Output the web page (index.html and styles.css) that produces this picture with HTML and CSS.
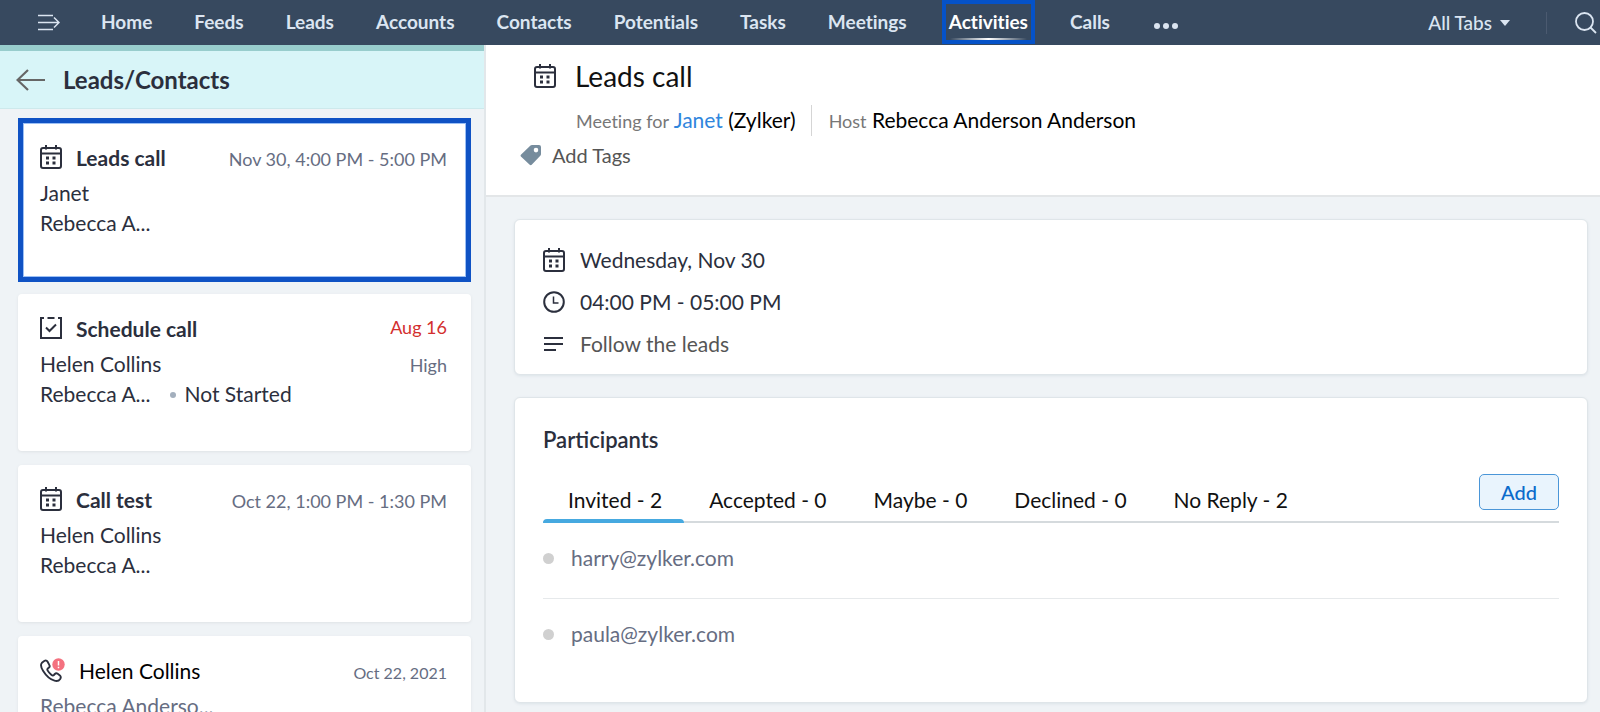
FILE: index.html
```html
<!DOCTYPE html>
<html lang="en">
<head>
<meta charset="utf-8">
<title>Activities - Leads call</title>
<link rel="stylesheet" href="styles.css">
</head>
<body>
<svg class="sprite" aria-hidden="true">
  <symbol id="calendar" viewBox="0 0 22 24">
    <g fill="none" stroke="currentColor" stroke-width="2"><rect x="1" y="3" width="20" height="20" rx="2"/><path d="M1 8.500h20M6 0v4.500M16 0v4.500"/></g>
    <path fill="currentColor" d="M6 11.500h3v3H6zM12.500 11.500h3v3h-3zM6 16.500h3v3H6zM12.500 16.500h3v3h-3z"/>
  </symbol>
</svg>
<header class="topbar">
  <button class="icon-button menu" aria-label="Open menu">
    <svg width="22" height="18" viewBox="0 0 22 18" fill="none" stroke="currentColor" stroke-width="1.500"><path d="M0 1.500h15M0 8.500h20.500M0 15.500h15M16 3.500l5 5-5 5"/></svg>
  </button>
  <nav class="tabs">
    <a href="#">Home</a>
    <a href="#">Feeds</a>
    <a href="#">Leads</a>
    <a href="#">Accounts</a>
    <a href="#">Contacts</a>
    <a href="#">Potentials</a>
    <a href="#">Tasks</a>
    <a href="#">Meetings</a>
    <a href="#" class="active" aria-current="page">Activities</a>
    <a href="#">Calls</a>
  </nav>
  <button class="icon-button more" aria-label="More tabs">
    <svg width="24" height="6" viewBox="0 0 24 6" fill="currentColor"><circle cx="3" cy="3" r="3"/><circle cx="12" cy="3" r="3"/><circle cx="21" cy="3" r="3"/></svg>
  </button>
  <button class="all-tabs">All Tabs
    <svg width="10" height="6" viewBox="0 0 10 6" fill="currentColor"><path d="M0 0h10L5 6z"/></svg>
  </button>
  <span class="topbar-divider"></span>
  <button class="icon-button search" aria-label="Search">
    <svg width="22" height="22" viewBox="0 0 22 22" fill="none" stroke="currentColor" stroke-width="1.800"><circle cx="9.500" cy="9.500" r="8.500"/><path d="M15.500 15.500L21 21"/></svg>
  </button>
</header>
<div class="workspace">
  <aside class="sidebar">
    <div class="sidebar-head">
      <button class="icon-button back" aria-label="Back">
        <svg width="30" height="22" viewBox="0 0 30 22" fill="none" stroke="currentColor" stroke-width="2.200"><path d="M29 11H2M12 1L1.500 11 12 21"/></svg>
      </button>
      <h2>Leads/Contacts</h2>
    </div>
    <div class="activity-list">
      <article class="activity selected">
        <div class="activity-top">
          <svg class="activity-icon" width="22" height="24"><use href="#calendar"/></svg>
          <h3>Leads call</h3>
          <time>Nov 30, 4:00 PM - 5:00 PM</time>
        </div>
        <p>Janet</p>
        <p>Rebecca A...</p>
      </article>
      <article class="activity">
        <div class="activity-top task">
          <svg class="activity-icon" width="22" height="24" viewBox="0 0 22 24" fill="none" stroke="currentColor" stroke-width="2"><path d="M4 2H1v20h20V2h-3M7.500 2h7M6 11.500l3.500 3.500 6.500-6.500"/></svg>
          <h3>Schedule call</h3>
          <time class="overdue">Aug 16</time>
        </div>
        <p>Helen Collins <span class="priority">High</span></p>
        <p>Rebecca A... <span class="status">Not Started</span></p>
      </article>
      <article class="activity">
        <div class="activity-top">
          <svg class="activity-icon" width="22" height="24"><use href="#calendar"/></svg>
          <h3>Call test</h3>
          <time>Oct 22, 1:00 PM - 1:30 PM</time>
        </div>
        <p>Helen Collins</p>
        <p>Rebecca A...</p>
      </article>
      <article class="activity call">
        <div class="activity-top">
          <svg class="activity-icon" width="25" height="24" viewBox="0 0 25 24"><path fill="none" stroke="currentColor" stroke-width="1.900" stroke-linejoin="round" d="M4.600 2.800L1.900 4.800C.4 6.500 1 9.600 3.200 13.100 5.900 17.500 10.500 21.600 14.500 22.700c2.700.7 4.600-.1 5.700-1.800.8-1.300.7-2.600-.3-3.500l-2.200-1.600c-1-.7-2.100-.6-2.900.2l-.9 1c-.7.700-1.500.6-2.600-.3-1.500-1.200-2.800-2.700-3.600-4.100-.6-1-.5-1.700.3-2.300l.8-.6c.9-.7 1.100-1.800.5-2.800L7.600 3.700c-.7-1.200-1.900-1.600-3-.9z"/><circle cx="18.500" cy="6.500" r="6.200" fill="#f4717f"/><path stroke="#fff" stroke-width="1.500" d="M18.500 3v4.500M18.500 8.700v1.600"/></svg>
          <h3>Helen Collins</h3>
          <time>Oct 22, 2021</time>
        </div>
        <p>Rebecca Anderso...</p>
      </article>
    </div>
  </aside>
  <main class="detail">
    <section class="record-head">
      <div class="record-title">
        <svg width="22" height="24"><use href="#calendar"/></svg>
        <h1>Leads call</h1>
      </div>
      <div class="record-meta">
        <span><span class="label">Meeting for</span> <a href="#">Janet</a> (Zylker)</span>
        <span class="host"><span class="label">Host</span> Rebecca Anderson Anderson</span>
      </div>
      <button class="add-tags">
        <svg width="22" height="22" viewBox="0 0 22 22"><path fill="#768c9d" fill-rule="evenodd" d="M10.500 1.500Q11 1 12 1h7q2 0 2 2v7q0 1-.7 1.700l-8.600 9q-1 .9-2 0L.9 12.500q-.8-.9 0-1.800zM16 3.800a2.300 2.300 0 1 0 0 4.600 2.300 2.300 0 0 0 0-4.600z"/></svg>
        Add Tags
      </button>
    </section>
    <div class="panels">
      <section class="panel summary">
        <div class="summary-row">
          <svg width="22" height="24"><use href="#calendar"/></svg>
          <span>Wednesday, Nov 30</span>
        </div>
        <div class="summary-row">
          <svg width="22" height="22" viewBox="0 0 22 22" fill="none" stroke="currentColor"><circle cx="11" cy="11" r="9.800" stroke-width="2"/><path stroke-width="1.500" d="M10.500 5.500v6.500h5"/></svg>
          <span>04:00 PM - 05:00 PM</span>
        </div>
        <div class="summary-row note">
          <svg width="22" height="16" viewBox="0 0 22 16" stroke="currentColor" stroke-width="2"><path d="M1 2h19M1 8h19M1 14h12"/></svg>
          <span>Follow the leads</span>
        </div>
      </section>
      <section class="panel participants">
        <h2>Participants</h2>
        <div class="participant-bar">
          <div class="participant-tabs" role="tablist">
            <button role="tab" aria-selected="true">Invited - 2</button>
            <button role="tab" aria-selected="false">Accepted - 0</button>
            <button role="tab" aria-selected="false">Maybe - 0</button>
            <button role="tab" aria-selected="false">Declined - 0</button>
            <button role="tab" aria-selected="false">No Reply - 2</button>
          </div>
          <button class="add">Add</button>
        </div>
        <ul>
          <li>harry@zylker.com</li>
          <li>paula@zylker.com</li>
        </ul>
      </section>
    </div>
  </main>
</div>
</body>
</html>
```
FILE: styles.css
```css
* {
  box-sizing: border-box;
}

body {
  margin: 0;
  height: 100vh;
  display: flex;
  flex-direction: column;
  overflow: hidden;
  background: #eff3f6;
  color: #2b2f3d;
  font: 21px/30px Lato, sans-serif;
}

h1, h2, h3, p, ul {
  margin: 0;
  padding: 0;
}

a {
  color: inherit;
  text-decoration: none;
}

button {
  padding: 0;
  border: 0;
  background: none;
  color: inherit;
  font: inherit;
}

svg {
  display: block;
  flex: none;
}

.sprite {
  position: absolute;
  width: 0;
  height: 0;
}

/* Top bar */
.topbar {
  display: flex;
  align-items: center;
  flex: none;
  height: 45px;
  padding: 0 3px 0 38px;
  background: #37495f;
  color: #dbe5f1;
  font-size: 19px;
}

.tabs {
  display: flex;
  gap: 28px;
  height: 100%;
  margin-left: 34px;
  font-weight: 700;
  font-variant-ligatures: none;
}

.tabs a {
  display: flex;
  align-items: center;
  height: 44px;
  padding: 0 7px;
}

.tabs .active {
  position: relative;
  box-shadow: inset 0 0 0 4px #0552c8;
  color: #fff;
}

.tabs .active::after {
  content: "";
  position: absolute;
  left: 8px;
  right: 8px;
  bottom: 4px;
  height: 2px;
  background: linear-gradient(90deg, transparent, #fff 50%, transparent);
}

.more {
  margin: 6px 0 0 37px;
}

.all-tabs {
  display: flex;
  align-items: center;
  gap: 8px;
  margin-left: auto;
  font-weight: 500;
}

.topbar-divider {
  width: 1px;
  height: 22px;
  margin: 0 28px 0 36px;
  background: #4b5a70;
}

/* Sidebar */
.workspace {
  display: flex;
  flex: 1;
  min-height: 0;
}

.sidebar {
  flex: none;
  width: 486px;
  border-right: 2px solid #e2e7ea;
  overflow: hidden;
}

.sidebar-head {
  display: flex;
  align-items: center;
  gap: 17px;
  height: 64px;
  padding-left: 16px;
  border-top: 6px solid #98cdcd;
  border-bottom: 1px solid #cde9ec;
  background: #d8f5f8;
}

.sidebar-head h2 {
  font-size: 24px;
  font-weight: 700;
}

.back {
  color: #666;
}

.activity-list {
  display: flex;
  flex-direction: column;
  gap: 14px;
  padding: 9px 13px 0 18px;
}

.activity {
  padding: 19px 24px 42px 22px;
  border-radius: 4px;
  background: #fff;
  box-shadow: 0 1px 3px #dfe2e5;
}

.activity.selected {
  margin-bottom: -2px;
  padding: 19px 19px 39px 17px;
  border: 5px solid #0f52c4;
  border-radius: 0;
  box-shadow: inset 0 0 0 1px #9cc0f5;
}

.activity-top {
  display: flex;
  align-items: baseline;
  margin-bottom: 4px;
  line-height: 32px;
}

.activity-icon {
  align-self: flex-start;
  margin-top: 3px;
}

.activity h3 {
  margin-left: 14px;
  font-size: 21px;
  font-weight: 700;
}

.activity time {
  margin-left: auto;
  color: #666d82;
  font-size: 18px;
  line-height: 28px;
}

.activity-top.task {
  align-items: flex-start;
}

.activity time.overdue {
  color: #d32f2f;
}

.activity p {
  display: flex;
  align-items: baseline;
}

.priority {
  margin-left: auto;
  color: #666d82;
  font-size: 18px;
  line-height: 24px;
}

.status {
  margin-left: 20px;
}

.status::before {
  content: "";
  display: inline-block;
  width: 6px;
  height: 6px;
  margin-right: 8px;
  border-radius: 50%;
  background: #a3afbd;
  vertical-align: 4px;
}

.call h3 {
  color: #000;
  font-weight: 400;
}

.activity.call time {
  font-size: 16px;
}

.call p {
  color: #666d82;
}

/* Record header */
.detail {
  flex: 1;
  min-width: 0;
}

.record-head {
  padding: 13px 34px 25px;
  border-bottom: 2px solid #e3e6e8;
  background: #fff;
}

.record-title {
  display: flex;
  align-items: center;
  gap: 19px;
  padding-left: 14px;
}

.record-title h1 {
  color: #111;
  font-size: 28px;
  font-weight: 400;
  line-height: 36px;
}

.record-meta {
  display: flex;
  align-items: center;
  padding: 11px 0 4px 56px;
  color: #000;
}

.record-meta a {
  color: #2f86dd;
}

.label {
  color: #777;
  font-size: 18px;
  font-variant-ligatures: none;
}

.host {
  margin-left: 15px;
  padding-left: 17px;
  border-left: 1px solid #d5d5d5;
}

.add-tags {
  display: flex;
  align-items: center;
  gap: 10px;
  color: #555;
  font-size: 20px;
}

/* Panels */
.panels {
  display: grid;
  gap: 22px;
  padding: 22px 12px 0 28px;
}

.panel {
  padding: 0 28px;
  border: 1px solid #dfe5e9;
  border-radius: 6px;
  background: #fff;
  box-shadow: 0 1px 3px #dce3e8;
}

.summary {
  display: grid;
  gap: 12px;
  padding-top: 25px;
  padding-bottom: 15px;
}

.summary-row {
  display: flex;
  align-items: center;
  gap: 15px;
}

.note span {
  color: #555;
}

.participants {
  padding-top: 27px;
  padding-bottom: 28px;
}

.participants h2 {
  font-size: 22px;
  font-weight: 600;
  line-height: 30px;
}

.participant-bar {
  display: flex;
  align-items: flex-start;
  justify-content: space-between;
  margin-top: 19px;
  border-bottom: 2px solid #d5dadd;
}

.participant-tabs {
  display: flex;
  margin-bottom: -2px;
}

.participant-tabs button {
  padding: 11px 22px 8px 25px;
  color: #111;
  line-height: 30px;
}

.participant-tabs [aria-selected="true"] {
  position: relative;
}

.participant-tabs [aria-selected="true"]::after {
  content: "";
  position: absolute;
  left: 0;
  right: 0;
  bottom: 0;
  height: 4px;
  border-radius: 4px 4px 0 0;
  background: #46a9e0;
}

.participants .add {
  width: 80px;
  height: 36px;
  border: 1px solid #4a96d8;
  border-radius: 5px;
  background: #e9f4fd;
  color: #0b6bcb;
  font-size: 20px;
  font-weight: 500;
}

.participants ul {
  list-style: none;
}

.participants li {
  display: flex;
  align-items: center;
  gap: 17px;
  padding: 20px 0 25px;
  color: #666d82;
}

.participants li + li {
  border-top: 1px solid #e6e9eb;
}

.participants li::before {
  content: "";
  width: 11px;
  height: 11px;
  border-radius: 50%;
  background: #d0d0d0;
}
```
